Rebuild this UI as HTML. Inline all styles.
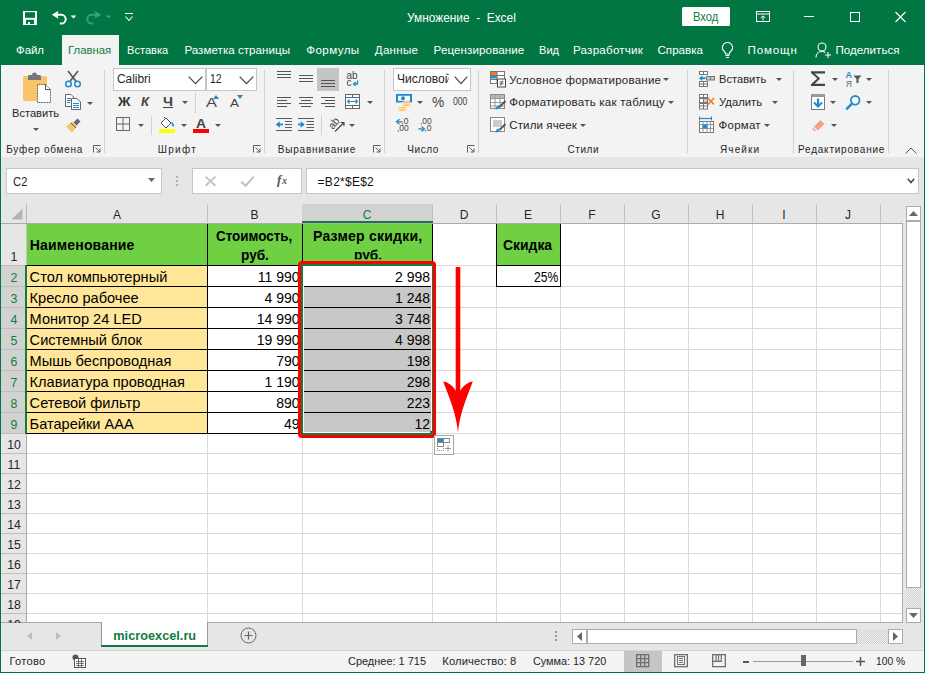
<!DOCTYPE html>
<html><head><meta charset="utf-8"><style>
html,body{margin:0;padding:0;width:925px;height:673px;overflow:hidden;background:#fff;}
body{position:relative;font-family:"Liberation Sans",sans-serif;}
body>div,body>svg,body>span{position:absolute;}
span{white-space:pre;transform-origin:0 0;display:block;}
svg{overflow:visible;}
</style></head><body>
<div style="left:0px;top:0px;width:925px;height:65px;background:#017542;"></div>
<div style="left:62px;top:35px;width:57px;height:30px;background:#f3f3f3;"></div>
<div style="left:0px;top:65px;width:925px;height:92px;background:#f3f3f3;"></div>
<div style="left:0px;top:157px;width:925px;height:1px;background:#d6d6d6;"></div>
<div style="left:0px;top:157px;width:925px;height:66px;background:#e6e6e6;"></div>
<svg style="left:22px;top:10px;" width="16" height="16" viewBox="0 0 16 16"><rect x="1" y="1" width="14" height="14" fill="#fff"/><rect x="3" y="2.2" width="10" height="5.6" fill="#017542"/><rect x="4" y="9.8" width="8" height="4.2" fill="#017542"/><rect x="6" y="12" width="2" height="2" fill="#fff"/></svg>
<svg style="left:51px;top:10px;" width="17" height="16" viewBox="0 0 17 16"><path d="M0.8 4.8L7.4 0.8 6.4 4.8 7.4 8.8z" fill="#fff"/><path d="M6 4.8H10.3A4.4 4.4 0 0 1 10.3 13.6H9.6" fill="none" stroke="#fff" stroke-width="2" stroke-linecap="round"/></svg>
<svg style="left:70px;top:15px;" width="7" height="4" viewBox="0 0 7 4"><path d="M0.5 0.5h6l-3 3z" fill="#fff"/></svg>
<svg style="left:86px;top:10px;" width="17" height="16" viewBox="0 0 17 16"><g transform="translate(16 0) scale(-1 1)"><path d="M0.8 4.8L7.4 0.8 6.4 4.8 7.4 8.8z" fill="#3a9c84"/><path d="M6 4.8H10.3A4.4 4.4 0 0 1 10.3 13.6H9.6" fill="none" stroke="#3a9c84" stroke-width="2" stroke-linecap="round"/></g></svg>
<svg style="left:105px;top:15px;" width="7" height="4" viewBox="0 0 7 4"><path d="M0.5 0.5h6l-3 3z" fill="#3a9c84"/></svg>
<svg style="left:124px;top:12px;" width="10" height="10" viewBox="0 0 10 10"><path d="M1 1.5h8" stroke="#fff" stroke-width="1"/><path d="M1.5 4.5l3.5 4 3.5-4" fill="none" stroke="#fff" stroke-width="1.1"/></svg>
<span style="left:406.70px;top:11.84px;font-size:12px;line-height:12px;font-weight:400;color:#fff;transform:scaleX(0.9902);">Умножение  -  Excel</span>
<div style="left:682px;top:7px;width:48px;height:19px;background:#fff;border-radius:1.5px"></div>
<span style="left:693.20px;top:10.84px;font-size:12px;line-height:12px;font-weight:400;color:#107c41;transform:scaleX(0.9357);">Вход</span>
<svg style="left:755px;top:10px;" width="16" height="13" viewBox="0 0 16 13"><rect x="1.5" y="1.5" width="13" height="10" fill="none" stroke="#fff" stroke-width="1"/><path d="M1.5 4h13" stroke="#fff"/><path d="M8 10.5V6M5.8 8L8 5.8 10.2 8" fill="none" stroke="#fff" stroke-width="1"/></svg>
<div style="left:804px;top:16px;width:10px;height:1px;background:#fff;"></div>
<svg style="left:849px;top:11px;" width="12" height="12" viewBox="0 0 12 12"><rect x="1.5" y="1.5" width="9" height="9" fill="none" stroke="#fff" stroke-width="1"/></svg>
<svg style="left:894px;top:11px;" width="13" height="12" viewBox="0 0 13 12"><path d="M1.5 1L11.5 11M11.5 1L1.5 11" stroke="#fff" stroke-width="1.1"/></svg>
<span style="left:16.30px;top:44.38px;font-size:11.6px;line-height:11.6px;font-weight:400;color:#fff;transform:scaleX(0.9823);">Файл</span>
<span style="left:68.20px;top:44.38px;font-size:11.6px;line-height:11.6px;font-weight:400;color:#107c41;transform:scaleX(0.9790);">Главная</span>
<span style="left:127.30px;top:44.38px;font-size:11.6px;line-height:11.6px;font-weight:400;color:#fff;transform:scaleX(0.9561);">Вставка</span>
<span style="left:184.40px;top:44.38px;font-size:11.6px;line-height:11.6px;font-weight:400;color:#fff;letter-spacing:0.027px;">Разметка страницы</span>
<span style="left:306.30px;top:44.38px;font-size:11.6px;line-height:11.6px;font-weight:400;color:#fff;letter-spacing:0.408px;">Формулы</span>
<span style="left:374.80px;top:44.38px;font-size:11.6px;line-height:11.6px;font-weight:400;color:#fff;letter-spacing:0.263px;">Данные</span>
<span style="left:433.60px;top:44.38px;font-size:11.6px;line-height:11.6px;font-weight:400;color:#fff;letter-spacing:0.091px;">Рецензирование</span>
<span style="left:539.10px;top:44.38px;font-size:11.6px;line-height:11.6px;font-weight:400;color:#fff;transform:scaleX(0.9583);">Вид</span>
<span style="left:573.00px;top:44.38px;font-size:11.6px;line-height:11.6px;font-weight:400;color:#fff;letter-spacing:0.229px;">Разработчик</span>
<span style="left:657.50px;top:44.38px;font-size:11.6px;line-height:11.6px;font-weight:400;color:#fff;">Справка</span>
<span style="left:747.50px;top:44.38px;font-size:11.6px;line-height:11.6px;font-weight:400;color:#fff;letter-spacing:0.832px;">Помощн</span>
<span style="left:835.50px;top:44.38px;font-size:11.6px;line-height:11.6px;font-weight:400;color:#fff;">Поделиться</span>
<svg style="left:720px;top:41px;" width="15" height="18" viewBox="0 0 15 18"><path d="M7.5 1.5a5 5 0 0 0-3 9c.8.7 1 1.5 1 2.5h4c0-1 .2-1.8 1-2.5a5 5 0 0 0-3-9z" fill="none" stroke="#fff" stroke-width="1.1"/><path d="M5.5 14.5h4M6 16.5h3" stroke="#fff" stroke-width="1.1"/></svg>
<svg style="left:815px;top:41px;" width="18" height="18" viewBox="0 0 18 18"><circle cx="7" cy="6" r="4" fill="none" stroke="#fff" stroke-width="1.1"/><path d="M1 16.5c0-3.5 2.5-6 6-6 1.5 0 2.5.4 3.4 1" fill="none" stroke="#fff" stroke-width="1.1"/><path d="M13 11v6M10 14h6" stroke="#fff" stroke-width="1.1"/></svg>
<div style="left:104px;top:70px;width:1px;height:83px;background:#d1d1d1;"></div>
<div style="left:264px;top:70px;width:1px;height:83px;background:#d1d1d1;"></div>
<div style="left:384px;top:70px;width:1px;height:83px;background:#d1d1d1;"></div>
<div style="left:478px;top:70px;width:1px;height:83px;background:#d1d1d1;"></div>
<div style="left:687px;top:70px;width:1px;height:83px;background:#d1d1d1;"></div>
<div style="left:793px;top:70px;width:1px;height:83px;background:#d1d1d1;"></div>
<div style="left:888px;top:70px;width:1px;height:83px;background:#d1d1d1;"></div>
<span style="left:6.30px;top:144.84px;font-size:10px;line-height:10px;font-weight:400;color:#262626;letter-spacing:0.732px;">Буфер обмена</span>
<span style="left:157.80px;top:144.84px;font-size:10px;line-height:10px;font-weight:400;color:#262626;letter-spacing:1.275px;">Шрифт</span>
<span style="left:277.80px;top:144.84px;font-size:10px;line-height:10px;font-weight:400;color:#262626;letter-spacing:0.779px;">Выравнивание</span>
<span style="left:407.30px;top:144.84px;font-size:10px;line-height:10px;font-weight:400;color:#262626;letter-spacing:0.560px;">Число</span>
<span style="left:567.50px;top:144.84px;font-size:10px;line-height:10px;font-weight:400;color:#262626;letter-spacing:0.548px;">Стили</span>
<span style="left:720.00px;top:144.84px;font-size:10px;line-height:10px;font-weight:400;color:#262626;letter-spacing:1.112px;">Ячейки</span>
<span style="left:798.00px;top:144.84px;font-size:10px;line-height:10px;font-weight:400;color:#262626;letter-spacing:0.786px;">Редактирование</span>
<svg style="left:93px;top:145px;" width="8" height="8" viewBox="0 0 8 8"><path d="M0.5 7.5V0.5h7" fill="none" stroke="#606060" stroke-width="1"/><path d="M2.5 2.5l4.5 4.5M7 3.5V7H3.5" fill="none" stroke="#606060" stroke-width="1"/></svg>
<svg style="left:253px;top:145px;" width="8" height="8" viewBox="0 0 8 8"><path d="M0.5 7.5V0.5h7" fill="none" stroke="#606060" stroke-width="1"/><path d="M2.5 2.5l4.5 4.5M7 3.5V7H3.5" fill="none" stroke="#606060" stroke-width="1"/></svg>
<svg style="left:373px;top:145px;" width="8" height="8" viewBox="0 0 8 8"><path d="M0.5 7.5V0.5h7" fill="none" stroke="#606060" stroke-width="1"/><path d="M2.5 2.5l4.5 4.5M7 3.5V7H3.5" fill="none" stroke="#606060" stroke-width="1"/></svg>
<svg style="left:467px;top:145px;" width="8" height="8" viewBox="0 0 8 8"><path d="M0.5 7.5V0.5h7" fill="none" stroke="#606060" stroke-width="1"/><path d="M2.5 2.5l4.5 4.5M7 3.5V7H3.5" fill="none" stroke="#606060" stroke-width="1"/></svg>
<svg style="left:905px;top:147px;" width="12" height="7" viewBox="0 0 12 7"><path d="M0.5 6.5l5.5-5.5 5.5 5.5" fill="none" stroke="#555" stroke-width="1"/></svg>
<svg style="left:22px;top:72px;" width="31" height="32" viewBox="0 0 31 32">
<rect x="1" y="4" width="24" height="25" rx="1.5" fill="#f9c46a"/>
<path d="M6 8V4.5c0-1 .6-1.5 1.5-1.5h2.5c0-1.5 1-2.5 2.5-2.5s2.5 1 2.5 2.5H17.5c.9 0 1.5.5 1.5 1.5V8z" fill="#777"/>
<path d="M15.5 12.5h8l5 5v13h-13z" fill="#fff" stroke="#555" stroke-width="1" stroke-dasharray="1 .6"/>
<path d="M23.5 12.5v5h5" fill="none" stroke="#555" stroke-width="1"/>
</svg>
<span style="left:11.60px;top:107.87px;font-size:11.5px;line-height:11.5px;font-weight:400;color:#262626;transform:scaleX(0.9662);">Вставить</span>
<svg style="left:33px;top:128px;" width="6" height="3" viewBox="0 0 6 3"><path d="M0 0h6l-3 3z" fill="#555"/></svg>
<svg style="left:64px;top:70px;" width="18" height="18" viewBox="0 0 18 18"><path d="M4 1l8.5 11M14 1L5.5 12" stroke="#555" stroke-width="1.6"/><circle cx="4.5" cy="14" r="2.8" fill="none" stroke="#1e8bcd" stroke-width="1.5"/><circle cx="13.5" cy="14" r="2.8" fill="none" stroke="#1e8bcd" stroke-width="1.5"/></svg>
<svg style="left:64px;top:94px;" width="18" height="16" viewBox="0 0 18 16"><path d="M1.5 0.5h5.5l2.5 2.5v9.5h-8z" fill="#fff" stroke="#666"/><path d="M7.5 4.5h5.5l3.5 3.5v7.5h-9z" fill="#fff" stroke="#666"/><path d="M3 4.5h4M3 6.5h4M3 8.5h3M9 9.5h6M9 11.5h6M9 13.5h6" stroke="#1e8bcd"/></svg>
<svg style="left:87px;top:101.5px;" width="6" height="3" viewBox="0 0 6 3"><path d="M0 0h6l-3 3z" fill="#555"/></svg>
<svg style="left:64px;top:117px;" width="18" height="16" viewBox="0 0 18 16"><path d="M2 9.5l6-5 5 5-5 6z" fill="#f9c46a"/><path d="M9.5 5.5l4-4 3 3-4 4z" fill="#666"/><path d="M7 6l5 5" stroke="#555" stroke-width="1"/></svg>
<div style="left:113px;top:68px;width:93px;height:23px;background:#fff;box-sizing:border-box;border:1px solid #c6c6c6"></div>
<div style="left:206px;top:68px;width:51px;height:23px;background:#fff;box-sizing:border-box;border:1px solid #c6c6c6"></div>
<span style="left:116.50px;top:73.12px;font-size:12.5px;line-height:12.5px;font-weight:400;color:#262626;transform:scaleX(0.9513);">Calibri</span>
<span style="left:209.60px;top:73.12px;font-size:12.5px;line-height:12.5px;font-weight:400;color:#262626;transform:scaleX(0.8343);">12</span>
<svg style="left:188px;top:76px;" width="15" height="9" viewBox="0 0 15 9"><path d="M0.7 0.7l6.8 7 6.8-7" fill="none" stroke="#444" stroke-width="1.2"/></svg>
<svg style="left:239px;top:76px;" width="15" height="9" viewBox="0 0 15 9"><path d="M0.7 0.7l6.8 7 6.8-7" fill="none" stroke="#444" stroke-width="1.2"/></svg>
<span style="left:117.50px;top:95.54px;font-size:12px;line-height:12px;font-weight:700;color:#333;transform:scaleX(1.1525);">Ж</span>
<span style="left:141.00px;top:95.54px;font-size:12px;line-height:12px;font-weight:700;color:#444;transform:scaleX(1.0845);font-style:italic;">К</span>
<span style="left:163.00px;top:95.54px;font-size:12px;line-height:12px;font-weight:700;color:#444;transform:scaleX(1.1860);">Ч</span>
<div style="left:163px;top:107px;width:10px;height:1px;background:#444;"></div>
<svg style="left:181.5px;top:101px;" width="6" height="3" viewBox="0 0 6 3"><path d="M0 0h6l-3 3z" fill="#555"/></svg>
<div style="left:195px;top:93px;width:1px;height:20px;background:#d1d1d1;"></div>
<span style="left:206.00px;top:96.27px;font-size:13.5px;line-height:13.5px;font-weight:400;color:#444;transform:scaleX(1.2216);">A</span>
<svg style="left:213px;top:95px;" width="6" height="4" viewBox="0 0 6 4"><path d="M0 4L3 0l3 4z" fill="#1e8bcd"/></svg>
<span style="left:230.00px;top:98.39px;font-size:11px;line-height:11px;font-weight:400;color:#444;transform:scaleX(1.2267);">A</span>
<svg style="left:237px;top:95px;" width="6" height="4" viewBox="0 0 6 4"><path d="M0 0h6L3 4z" fill="#1e8bcd"/></svg>
<svg style="left:116px;top:117px;" width="15" height="15" viewBox="0 0 15 15"><rect x="0.5" y="0.5" width="13" height="13" fill="none" stroke="#666"/><path d="M7 0.5v13M0.5 7h13" stroke="#666"/></svg>
<svg style="left:138px;top:124px;" width="6" height="3" viewBox="0 0 6 3"><path d="M0 0h6l-3 3z" fill="#555"/></svg>
<div style="left:151px;top:116px;width:1px;height:19px;background:#d1d1d1;"></div>
<svg style="left:158px;top:116px;" width="18" height="17" viewBox="0 0 18 17"><path d="M3 7l5-5 5 5-5 5z" fill="#fff" stroke="#555" stroke-width="1"/><path d="M6 1l2 2" stroke="#555"/><path d="M13.5 6.5c1.5 1.5 2 3 1.2 3.8" fill="none" stroke="#1e8bcd" stroke-width="1.6"/><rect x="1" y="13" width="16" height="4" fill="#ffff00"/></svg>
<svg style="left:180.5px;top:124px;" width="6" height="3" viewBox="0 0 6 3"><path d="M0 0h6l-3 3z" fill="#555"/></svg>
<span style="left:196.00px;top:117.84px;font-size:12px;line-height:12px;font-weight:700;color:#444;transform:scaleX(1.1539);">A</span>
<div style="left:193px;top:129px;width:16px;height:4px;background:#ff0000;"></div>
<svg style="left:214.5px;top:124px;" width="6" height="3" viewBox="0 0 6 3"><path d="M0 0h6l-3 3z" fill="#555"/></svg>
<svg style="left:277px;top:71px;" width="15" height="9" viewBox="0 0 15 9"><rect x="0" y="0" width="14" height="1" fill="#555"/><rect x="0" y="3" width="14" height="1" fill="#555"/><rect x="0" y="6" width="14" height="1" fill="#555"/></svg>
<svg style="left:298.5px;top:75px;" width="15" height="9" viewBox="0 0 15 9"><rect x="0" y="0" width="14" height="1" fill="#555"/><rect x="0" y="3" width="14" height="1" fill="#555"/><rect x="0" y="6" width="14" height="1" fill="#555"/></svg>
<div style="left:317px;top:68px;width:22px;height:23px;background:#c5c5c5;"></div>
<svg style="left:321px;top:80px;" width="15" height="9" viewBox="0 0 15 9"><rect x="0" y="0" width="14" height="1" fill="#555"/><rect x="0" y="3" width="14" height="1" fill="#555"/><rect x="0" y="6" width="14" height="1" fill="#555"/></svg>
<svg style="left:345px;top:70px;" width="16" height="17" viewBox="0 0 16 17"><text x="1.5" y="8.5" font-family="Liberation Sans" font-size="10" fill="#444">ab</text><text x="1.5" y="16" font-family="Liberation Sans" font-size="10" fill="#444">c</text><path d="M12.5 10.5v3.5H9" fill="none" stroke="#1e8bcd" stroke-width="1.3"/><path d="M10.5 12l-2 2 2 2" fill="none" stroke="#1e8bcd" stroke-width="1.2"/></svg>
<svg style="left:277px;top:97px;" width="15" height="12" viewBox="0 0 15 12"><rect x="0" y="0" width="14" height="1" fill="#555"/><rect x="0" y="3" width="10" height="1" fill="#555"/><rect x="0" y="6" width="14" height="1" fill="#555"/><rect x="0" y="9" width="10" height="1" fill="#555"/></svg>
<svg style="left:298.5px;top:97px;" width="15" height="12" viewBox="0 0 15 12"><rect x="0" y="0" width="14" height="1" fill="#555"/><rect x="2" y="3" width="10" height="1" fill="#555"/><rect x="0" y="6" width="14" height="1" fill="#555"/><rect x="2" y="9" width="10" height="1" fill="#555"/></svg>
<svg style="left:321px;top:97px;" width="15" height="12" viewBox="0 0 15 12"><rect x="0" y="0" width="14" height="1" fill="#555"/><rect x="4" y="3" width="10" height="1" fill="#555"/><rect x="0" y="6" width="14" height="1" fill="#555"/><rect x="4" y="9" width="10" height="1" fill="#555"/></svg>
<svg style="left:345px;top:94px;" width="16" height="16" viewBox="0 0 16 16"><rect x="0.5" y="0.5" width="14" height="14" fill="#fff" stroke="#666"/><path d="M0.5 3.5h14M0.5 11.5h14M7.5 0.5v3M7.5 11.5v3" stroke="#666"/><path d="M2.5 7.5h10M4.5 5.5l-2 2 2 2M10.5 5.5l2 2-2 2" fill="none" stroke="#1e8bcd" stroke-width="1.1"/></svg>
<svg style="left:367px;top:101px;" width="6" height="3" viewBox="0 0 6 3"><path d="M0 0h6l-3 3z" fill="#555"/></svg>
<svg style="left:275px;top:117px;" width="18" height="15" viewBox="0 0 18 15"><path d="M1 1.5h16M10 4.5h7M10 7.5h7M10 10.5h7M1 13.5h16" stroke="#5a5a5a"/><path d="M2 7.5h6" stroke="#1e8bcd" stroke-width="1.8"/><path d="M0.8 7.5L4.8 4.2v6.6z" fill="#1e8bcd"/></svg>
<svg style="left:297px;top:117px;" width="18" height="15" viewBox="0 0 18 15"><path d="M1 1.5h16M9.5 4.5h7.5M9.5 7.5h7.5M9.5 10.5h7.5M1 13.5h16" stroke="#5a5a5a"/><path d="M1 7.5h5.5" stroke="#1e8bcd" stroke-width="1.8"/><path d="M7.7 7.5L3.7 4.2v6.6z" fill="#1e8bcd"/></svg>
<div style="left:321px;top:115px;width:1px;height:20px;background:#d1d1d1;"></div>
<svg style="left:328px;top:116px;" width="18" height="17" viewBox="0 0 18 17"><text x="0" y="0" font-family="Liberation Sans" font-size="10.5" fill="#444" transform="translate(5 14) rotate(-52)">ab</text><path d="M7 15.5L16 6.5M12.5 6.5H16V10" fill="none" stroke="#444" stroke-width="1.1"/></svg>
<svg style="left:349px;top:124px;" width="6" height="3" viewBox="0 0 6 3"><path d="M0 0h6l-3 3z" fill="#555"/></svg>
<div style="left:393px;top:68px;width:78px;height:23px;background:#fff;box-sizing:border-box;border:1px solid #c6c6c6"></div>
<span style="left:396.60px;top:73.12px;font-size:12.5px;line-height:12.5px;font-weight:400;color:#262626;transform:scaleX(0.9666);clip-path:inset(0 3px 0 0);">Числовой</span>
<svg style="left:454px;top:76px;" width="14" height="9" viewBox="0 0 14 9"><path d="M0.7 0.7l6.3 7 6.3-7" fill="none" stroke="#444" stroke-width="1.2"/></svg>
<svg style="left:395px;top:93px;" width="18" height="18" viewBox="0 0 18 18"><rect x="1" y="1" width="16" height="8.5" fill="#1e8bcd"/><rect x="3" y="2.8" width="12" height="5" fill="#fff"/><circle cx="8" cy="5.2" r="2" fill="#1e8bcd"/><ellipse cx="11.5" cy="9.8" rx="4.2" ry="1.5" fill="#f9c46a" stroke="#fff" stroke-width=".6"/><ellipse cx="11.5" cy="12.3" rx="4.2" ry="1.5" fill="#f9c46a" stroke="#fff" stroke-width=".6"/><ellipse cx="7.5" cy="14.8" rx="4.2" ry="1.5" fill="#f9c46a" stroke="#fff" stroke-width=".6"/><ellipse cx="7.5" cy="17" rx="4.2" ry="1.3" fill="#f9c46a" stroke="#fff" stroke-width=".6"/></svg>
<svg style="left:417px;top:101px;" width="6" height="3" viewBox="0 0 6 3"><path d="M0 0h6l-3 3z" fill="#555"/></svg>
<span style="left:432.00px;top:95.43px;font-size:14.5px;line-height:14.5px;font-weight:400;color:#444;transform:scaleX(0.9463);">%</span>
<span style="left:452.50px;top:97.03px;font-size:10px;line-height:10px;font-weight:400;color:#444;transform:scaleX(0.8631);">000</span>
<svg style="left:395px;top:117px;" width="17" height="16" viewBox="0 0 17 16"><text x="6.5" y="6.5" font-family="Liberation Sans" font-size="8.5" fill="#444">,0</text><text x="2" y="13.8" font-family="Liberation Sans" font-size="8.5" fill="#444">,00</text><path d="M2.5 4.8h5" stroke="#1e8bcd" stroke-width="1.4"/><path d="M4.5 2.3L1.5 4.8l3 2.5" fill="none" stroke="#1e8bcd" stroke-width="1.3"/></svg>
<svg style="left:418px;top:117px;" width="17" height="16" viewBox="0 0 17 16"><text x="2" y="6.5" font-family="Liberation Sans" font-size="8.5" fill="#444">,00</text><text x="6.5" y="13.8" font-family="Liberation Sans" font-size="8.5" fill="#444">,0</text><path d="M0.5 12h5" stroke="#1e8bcd" stroke-width="1.4"/><path d="M3.5 9.5l3 2.5-3 2.5" fill="none" stroke="#1e8bcd" stroke-width="1.3"/></svg>
<svg style="left:490px;top:71px;" width="17" height="17" viewBox="0 0 17 17"><rect x="0.5" y="0.5" width="14" height="12" fill="#fff" stroke="#777"/><rect x="1" y="1" width="6" height="3" fill="#f07a2a"/><rect x="1" y="4.5" width="6" height="3" fill="#1e8bcd"/><path d="M0.5 4.5h14M0.5 8.5h14M7 0.5v12" stroke="#777"/><rect x="7.5" y="8" width="8" height="8" fill="#fff" stroke="#444"/><path d="M9.5 11h4M9.5 13h4M12.5 9.5l-2 5" stroke="#444" stroke-width=".8"/></svg>
<svg style="left:490px;top:94px;" width="17" height="17" viewBox="0 0 17 17"><rect x="0.5" y="0.5" width="14" height="14" fill="#fff" stroke="#888"/><rect x="1" y="1" width="13" height="3" fill="#bbb"/><path d="M0.5 4.5h14M0.5 8.5h14M0.5 12h14M5 0.5v14M10 0.5v14" stroke="#999"/><path d="M15.5 7l-6 6" stroke="#555" stroke-width="2"/><path d="M9 11.5c-2 0-3 1.5-3.5 4 2.5 0 4-1 4.5-3z" fill="#1e8bcd"/></svg>
<svg style="left:490px;top:117px;" width="17" height="17" viewBox="0 0 17 17"><rect x="0.5" y="0.5" width="14" height="14" fill="#fff" stroke="#888"/><rect x="3" y="3" width="9" height="7" fill="#ccc"/><path d="M15.5 7l-6 6" stroke="#555" stroke-width="2"/><path d="M9 11.5c-2 0-3 1.5-3.5 4 2.5 0 4-1 4.5-3z" fill="#1e8bcd"/></svg>
<span style="left:509.30px;top:74.67px;font-size:11.5px;line-height:11.5px;font-weight:400;color:#262626;letter-spacing:0.245px;">Условное форматирование</span>
<svg style="left:663px;top:78px;" width="6" height="3" viewBox="0 0 6 3"><path d="M0 0h6l-3 3z" fill="#555"/></svg>
<span style="left:509.30px;top:97.47px;font-size:11.5px;line-height:11.5px;font-weight:400;color:#262626;letter-spacing:0.241px;">Форматировать как таблицу</span>
<svg style="left:668px;top:101px;" width="6" height="3" viewBox="0 0 6 3"><path d="M0 0h6l-3 3z" fill="#555"/></svg>
<span style="left:509.30px;top:120.37px;font-size:11.5px;line-height:11.5px;font-weight:400;color:#262626;letter-spacing:0.123px;">Стили ячеек</span>
<svg style="left:579.5px;top:124px;" width="6" height="3" viewBox="0 0 6 3"><path d="M0 0h6l-3 3z" fill="#555"/></svg>
<svg style="left:698px;top:70px;" width="18" height="18" viewBox="0 0 18 18"><rect x="1.5" y="1.5" width="8" height="3" fill="#fff" stroke="#777"/><path d="M5.5 1.5v3" stroke="#777"/><rect x="8.5" y="6.5" width="8" height="3.5" fill="#ccc" stroke="#777"/><path d="M12.5 6.5v3.5" stroke="#777"/><rect x="1.5" y="11.5" width="8" height="5" fill="#fff" stroke="#777"/><path d="M1.5 14h8M5.5 11.5v5" stroke="#777"/><path d="M2.5 8.2H7.5" stroke="#1e8bcd" stroke-width="1.8"/><path d="M1 8.2L4.3 5.5v5.4z" fill="#1e8bcd"/></svg>
<span style="left:718.50px;top:73.67px;font-size:11.5px;line-height:11.5px;font-weight:400;color:#262626;transform:scaleX(0.9683);">Вставить</span>
<svg style="left:776px;top:78px;" width="6" height="3" viewBox="0 0 6 3"><path d="M0 0h6l-3 3z" fill="#555"/></svg>
<svg style="left:698px;top:93px;" width="18" height="18" viewBox="0 0 18 18"><rect x="1.5" y="1.5" width="8" height="3" fill="#fff" stroke="#777"/><path d="M5.5 1.5v3" stroke="#777"/><rect x="1.5" y="5.5" width="8" height="4" fill="#fff" stroke="#777"/><rect x="5.5" y="5.5" width="4" height="4" fill="#ccc" stroke="#777"/><rect x="1.5" y="10.5" width="8" height="5.5" fill="#fff" stroke="#777"/><path d="M1.5 13h8M5.5 10.5v5.5" stroke="#777"/><path d="M10 5l6 6.5M16 5l-6 6.5" stroke="#f07a2a" stroke-width="1.6"/></svg>
<span style="left:718.50px;top:97.27px;font-size:11.5px;line-height:11.5px;font-weight:400;color:#262626;transform:scaleX(0.9817);">Удалить</span>
<svg style="left:772px;top:101px;" width="6" height="3" viewBox="0 0 6 3"><path d="M0 0h6l-3 3z" fill="#555"/></svg>
<svg style="left:698px;top:116px;" width="18" height="18" viewBox="0 0 18 18"><path d="M2 2.5h11" stroke="#1e8bcd" stroke-width="1.2"/><path d="M1.5 0.5v4M13.5 0.5v4" stroke="#1e8bcd"/><rect x="1.5" y="5.5" width="14" height="11" fill="#fff" stroke="#777"/><path d="M1.5 8.5h14M1.5 12.5h14M5 5.5v11M9 5.5v11M12.5 5.5v11" stroke="#999"/><rect x="4.5" y="8.5" width="5" height="4" fill="#1e8bcd"/></svg>
<span style="left:718.50px;top:120.17px;font-size:11.5px;line-height:11.5px;font-weight:400;color:#262626;letter-spacing:0.250px;">Формат</span>
<svg style="left:764px;top:124px;" width="6" height="3" viewBox="0 0 6 3"><path d="M0 0h6l-3 3z" fill="#555"/></svg>
<svg style="left:809px;top:70px;" width="18" height="18" viewBox="0 0 18 18"><path d="M2 1.2H16V3.4H5.6L11.2 8.6 5.6 13.8H16V16H2V14.2L8.3 8.6 2 3z" fill="#444"/></svg>
<svg style="left:832px;top:78px;" width="6" height="3" viewBox="0 0 6 3"><path d="M0 0h6l-3 3z" fill="#555"/></svg>
<svg style="left:845px;top:70px;" width="19" height="18" viewBox="0 0 19 18"><text x="0.5" y="8" font-family="Liberation Sans" font-size="9" font-weight="bold" fill="#1e8bcd">A</text><text x="0.8" y="17" font-family="Liberation Sans" font-size="8.5" fill="#666">Я</text><path d="M8.5 5.5h8l-3 3.5v4h-2V9z" fill="#555"/></svg>
<svg style="left:865.5px;top:78px;" width="6" height="3" viewBox="0 0 6 3"><path d="M0 0h6l-3 3z" fill="#555"/></svg>
<svg style="left:810px;top:93px;" width="16" height="17" viewBox="0 0 16 17"><rect x="1.5" y="1.5" width="13" height="15" fill="#fff" stroke="#777"/><rect x="1" y="1" width="14" height="3" fill="#999"/><path d="M8 5.5v7" stroke="#1e8bcd" stroke-width="2.2"/><path d="M4 9.5L8 13.5 12 9.5" fill="none" stroke="#1e8bcd" stroke-width="2"/></svg>
<svg style="left:829.5px;top:101px;" width="6" height="3" viewBox="0 0 6 3"><path d="M0 0h6l-3 3z" fill="#555"/></svg>
<svg style="left:845px;top:94px;" width="17" height="16" viewBox="0 0 17 16"><circle cx="10.2" cy="6.3" r="4.3" fill="#fff" stroke="#1e8bcd" stroke-width="1.8"/><path d="M7 9.6L2 14.6" stroke="#1e8bcd" stroke-width="2.6" stroke-linecap="round"/></svg>
<svg style="left:865.5px;top:101px;" width="6" height="3" viewBox="0 0 6 3"><path d="M0 0h6l-3 3z" fill="#555"/></svg>
<svg style="left:811px;top:117px;" width="15" height="15" viewBox="0 0 15 15"><path d="M3 9.5L9.5 3l4 4L7 13.5z" fill="#f4a582"/><path d="M1.5 11l3 3" stroke="#f4b9a0" stroke-width="2"/><path d="M6.5 8.5l3-3" stroke="#e8774a" stroke-width="1" stroke-dasharray="1 1"/></svg>
<svg style="left:830.5px;top:124px;" width="6" height="3" viewBox="0 0 6 3"><path d="M0 0h6l-3 3z" fill="#555"/></svg>
<div style="left:6px;top:168px;width:156px;height:26px;background:#fff;box-sizing:border-box;border:1px solid #c6c6c6"></div>
<span style="left:13.30px;top:175.94px;font-size:12px;line-height:12px;font-weight:400;color:#262626;transform:scaleX(0.9387);">C2</span>
<svg style="left:148px;top:178px;" width="7" height="4" viewBox="0 0 7 4"><path d="M0 0h7L3.5 4z" fill="#666"/></svg>
<div style="left:176px;top:176px;width:2px;height:2px;background:#b0b0b0;"></div>
<div style="left:176px;top:180px;width:2px;height:2px;background:#b0b0b0;"></div>
<div style="left:176px;top:184px;width:2px;height:2px;background:#b0b0b0;"></div>
<div style="left:192px;top:168px;width:110px;height:26px;background:#fff;box-sizing:border-box;border:1px solid #c6c6c6"></div>
<svg style="left:204px;top:175px;" width="13" height="12" viewBox="0 0 13 12"><path d="M1.6 1.6l9.8 9.2M11.4 1.6L1.6 10.8" stroke="#c2c2c2" stroke-width="1.9"/></svg>
<svg style="left:240px;top:175px;" width="15" height="12" viewBox="0 0 15 12"><path d="M1.2 6.8l4.6 4 7.8-9.2" fill="none" stroke="#c2c2c2" stroke-width="2.1"/></svg>
<svg style="left:276px;top:172px;" width="15" height="16" viewBox="0 0 15 16"><text x="1" y="12" font-family="Liberation Serif" font-style="italic" font-weight="bold" font-size="13" fill="#555">f</text><text x="6" y="12.3" font-family="Liberation Serif" font-style="italic" font-weight="bold" font-size="10" fill="#555">x</text></svg>
<div style="left:306px;top:168px;width:613px;height:26px;background:#fff;box-sizing:border-box;border:1px solid #c6c6c6"></div>
<span style="left:317.60px;top:175.84px;font-size:12px;line-height:12px;font-weight:400;color:#111;letter-spacing:0.260px;">=B2*$E$2</span>
<svg style="left:907px;top:178px;" width="8" height="6" viewBox="0 0 8 6"><path d="M0.8 0.8L4 4.5 7.2 0.8" fill="none" stroke="#444" stroke-width="1.5"/></svg>
<div style="left:903px;top:223px;width:21px;height:400px;background:#e6e6e6;"></div>
<div style="left:27px;top:223px;width:876px;height:399px;background:#fff;"></div>
<div style="left:207px;top:223px;width:1px;height:399px;background:#d9d9d9;"></div>
<div style="left:302px;top:223px;width:1px;height:399px;background:#d9d9d9;"></div>
<div style="left:432px;top:223px;width:1px;height:399px;background:#d9d9d9;"></div>
<div style="left:496px;top:223px;width:1px;height:399px;background:#d9d9d9;"></div>
<div style="left:560px;top:223px;width:1px;height:399px;background:#d9d9d9;"></div>
<div style="left:624px;top:223px;width:1px;height:399px;background:#d9d9d9;"></div>
<div style="left:688px;top:223px;width:1px;height:399px;background:#d9d9d9;"></div>
<div style="left:752px;top:223px;width:1px;height:399px;background:#d9d9d9;"></div>
<div style="left:816px;top:223px;width:1px;height:399px;background:#d9d9d9;"></div>
<div style="left:880px;top:223px;width:1px;height:399px;background:#d9d9d9;"></div>
<div style="left:27px;top:265px;width:876px;height:1px;background:#d9d9d9;"></div>
<div style="left:27px;top:286px;width:876px;height:1px;background:#d9d9d9;"></div>
<div style="left:27px;top:307px;width:876px;height:1px;background:#d9d9d9;"></div>
<div style="left:27px;top:328px;width:876px;height:1px;background:#d9d9d9;"></div>
<div style="left:27px;top:349px;width:876px;height:1px;background:#d9d9d9;"></div>
<div style="left:27px;top:370px;width:876px;height:1px;background:#d9d9d9;"></div>
<div style="left:27px;top:391px;width:876px;height:1px;background:#d9d9d9;"></div>
<div style="left:27px;top:412px;width:876px;height:1px;background:#d9d9d9;"></div>
<div style="left:27px;top:433px;width:876px;height:1px;background:#d9d9d9;"></div>
<div style="left:27px;top:453px;width:876px;height:1px;background:#d9d9d9;"></div>
<div style="left:27px;top:473px;width:876px;height:1px;background:#d9d9d9;"></div>
<div style="left:27px;top:493px;width:876px;height:1px;background:#d9d9d9;"></div>
<div style="left:27px;top:513px;width:876px;height:1px;background:#d9d9d9;"></div>
<div style="left:27px;top:533px;width:876px;height:1px;background:#d9d9d9;"></div>
<div style="left:27px;top:553px;width:876px;height:1px;background:#d9d9d9;"></div>
<div style="left:27px;top:573px;width:876px;height:1px;background:#d9d9d9;"></div>
<div style="left:27px;top:593px;width:876px;height:1px;background:#d9d9d9;"></div>
<div style="left:27px;top:613px;width:876px;height:1px;background:#d9d9d9;"></div>
<div style="left:902px;top:223px;width:1px;height:400px;background:#a8a8a8;"></div>
<div style="left:1px;top:622px;width:902px;height:1px;background:#a8a8a8;"></div>
<div style="left:0px;top:204px;width:26px;height:418px;background:#e6e6e6;"></div>
<div style="left:1px;top:266px;width:25px;height:167px;background:#d2d2d2;"></div>
<div style="left:1px;top:265px;width:25px;height:1px;background:#bdbdbd;"></div>
<span style="left:10.58px;top:250.59px;font-size:12.3px;line-height:12.3px;font-weight:400;color:#262626;">1</span>
<div style="left:1px;top:286px;width:25px;height:1px;background:#bdbdbd;"></div>
<span style="left:10.58px;top:271.59px;font-size:12.3px;line-height:12.3px;font-weight:400;color:#107c41;">2</span>
<div style="left:1px;top:307px;width:25px;height:1px;background:#bdbdbd;"></div>
<span style="left:10.58px;top:292.59px;font-size:12.3px;line-height:12.3px;font-weight:400;color:#107c41;">3</span>
<div style="left:1px;top:328px;width:25px;height:1px;background:#bdbdbd;"></div>
<span style="left:10.58px;top:313.59px;font-size:12.3px;line-height:12.3px;font-weight:400;color:#107c41;">4</span>
<div style="left:1px;top:349px;width:25px;height:1px;background:#bdbdbd;"></div>
<span style="left:10.58px;top:334.59px;font-size:12.3px;line-height:12.3px;font-weight:400;color:#107c41;">5</span>
<div style="left:1px;top:370px;width:25px;height:1px;background:#bdbdbd;"></div>
<span style="left:10.58px;top:355.59px;font-size:12.3px;line-height:12.3px;font-weight:400;color:#107c41;">6</span>
<div style="left:1px;top:391px;width:25px;height:1px;background:#bdbdbd;"></div>
<span style="left:10.58px;top:376.59px;font-size:12.3px;line-height:12.3px;font-weight:400;color:#107c41;">7</span>
<div style="left:1px;top:412px;width:25px;height:1px;background:#bdbdbd;"></div>
<span style="left:10.58px;top:397.59px;font-size:12.3px;line-height:12.3px;font-weight:400;color:#107c41;">8</span>
<div style="left:1px;top:433px;width:25px;height:1px;background:#bdbdbd;"></div>
<span style="left:10.58px;top:418.59px;font-size:12.3px;line-height:12.3px;font-weight:400;color:#107c41;">9</span>
<div style="left:1px;top:453px;width:25px;height:1px;background:#bdbdbd;"></div>
<span style="left:7.16px;top:438.59px;font-size:12.3px;line-height:12.3px;font-weight:400;color:#262626;">10</span>
<div style="left:1px;top:473px;width:25px;height:1px;background:#bdbdbd;"></div>
<span style="left:7.62px;top:458.59px;font-size:12.3px;line-height:12.3px;font-weight:400;color:#262626;">11</span>
<div style="left:1px;top:493px;width:25px;height:1px;background:#bdbdbd;"></div>
<span style="left:7.16px;top:478.59px;font-size:12.3px;line-height:12.3px;font-weight:400;color:#262626;">12</span>
<div style="left:1px;top:513px;width:25px;height:1px;background:#bdbdbd;"></div>
<span style="left:7.16px;top:498.59px;font-size:12.3px;line-height:12.3px;font-weight:400;color:#262626;">13</span>
<div style="left:1px;top:533px;width:25px;height:1px;background:#bdbdbd;"></div>
<span style="left:7.16px;top:518.59px;font-size:12.3px;line-height:12.3px;font-weight:400;color:#262626;">14</span>
<div style="left:1px;top:553px;width:25px;height:1px;background:#bdbdbd;"></div>
<span style="left:7.16px;top:538.59px;font-size:12.3px;line-height:12.3px;font-weight:400;color:#262626;">15</span>
<div style="left:1px;top:573px;width:25px;height:1px;background:#bdbdbd;"></div>
<span style="left:7.16px;top:558.59px;font-size:12.3px;line-height:12.3px;font-weight:400;color:#262626;">16</span>
<div style="left:1px;top:593px;width:25px;height:1px;background:#bdbdbd;"></div>
<span style="left:7.16px;top:578.59px;font-size:12.3px;line-height:12.3px;font-weight:400;color:#262626;">17</span>
<div style="left:1px;top:613px;width:25px;height:1px;background:#bdbdbd;"></div>
<span style="left:7.16px;top:598.59px;font-size:12.3px;line-height:12.3px;font-weight:400;color:#262626;">18</span>
<span style="left:7.16px;top:618.59px;font-size:12.3px;line-height:12.3px;font-weight:400;color:#262626;">19</span>
<div style="left:25px;top:265px;width:2px;height:169px;background:#107c41;"></div>
<div style="left:0px;top:223px;width:903px;height:1px;background:#ababab;"></div>
<div style="left:207px;top:204px;width:1px;height:19px;background:#c0c0c0;"></div>
<div style="left:302px;top:204px;width:1px;height:19px;background:#c0c0c0;"></div>
<div style="left:432px;top:204px;width:1px;height:19px;background:#c0c0c0;"></div>
<div style="left:496px;top:204px;width:1px;height:19px;background:#c0c0c0;"></div>
<div style="left:560px;top:204px;width:1px;height:19px;background:#c0c0c0;"></div>
<div style="left:624px;top:204px;width:1px;height:19px;background:#c0c0c0;"></div>
<div style="left:688px;top:204px;width:1px;height:19px;background:#c0c0c0;"></div>
<div style="left:752px;top:204px;width:1px;height:19px;background:#c0c0c0;"></div>
<div style="left:816px;top:204px;width:1px;height:19px;background:#c0c0c0;"></div>
<div style="left:880px;top:204px;width:1px;height:19px;background:#c0c0c0;"></div>
<div style="left:26px;top:204px;width:1px;height:19px;background:#b9b9b9;"></div>
<div style="left:26px;top:224px;width:1px;height:41px;background:#c6c6c6;"></div>
<div style="left:26px;top:434px;width:1px;height:188px;background:#a8a8a8;"></div>
<div style="left:302px;top:204px;width:130px;height:19px;background:#d2d2d2;"></div>
<div style="left:302px;top:221px;width:131px;height:2px;background:#107c41;"></div>
<span style="left:113.00px;top:208.54px;font-size:12px;line-height:12px;font-weight:400;color:#262626;">A</span>
<span style="left:250.50px;top:208.54px;font-size:12px;line-height:12px;font-weight:400;color:#262626;">B</span>
<span style="left:362.67px;top:208.54px;font-size:12px;line-height:12px;font-weight:400;color:#107c41;">C</span>
<span style="left:459.67px;top:208.54px;font-size:12px;line-height:12px;font-weight:400;color:#262626;">D</span>
<span style="left:524.00px;top:208.54px;font-size:12px;line-height:12px;font-weight:400;color:#262626;">E</span>
<span style="left:588.33px;top:208.54px;font-size:12px;line-height:12px;font-weight:400;color:#262626;">F</span>
<span style="left:651.33px;top:208.54px;font-size:12px;line-height:12px;font-weight:400;color:#262626;">G</span>
<span style="left:715.67px;top:208.54px;font-size:12px;line-height:12px;font-weight:400;color:#262626;">H</span>
<span style="left:782.33px;top:208.54px;font-size:12px;line-height:12px;font-weight:400;color:#262626;">I</span>
<span style="left:845.00px;top:208.54px;font-size:12px;line-height:12px;font-weight:400;color:#262626;">J</span>
<svg style="left:11px;top:208px;" width="12" height="12" viewBox="0 0 12 12"><path d="M11.5 0.5v11h-11z" fill="#b4b4b4"/></svg>
<div style="left:27px;top:224px;width:275px;height:41px;background:#70d044;"></div>
<div style="left:302px;top:224px;width:130px;height:41px;background:#70d044;"></div>
<div style="left:496px;top:224px;width:64px;height:41px;background:#70d044;"></div>
<div style="left:27px;top:265px;width:180px;height:168px;background:#ffe699;"></div>
<div style="left:304px;top:287px;width:128px;height:145px;background:#c8c8c8;"></div>
<div style="left:207px;top:224px;width:1px;height:210px;background:#000;"></div>
<div style="left:302px;top:224px;width:1px;height:210px;background:#000;"></div>
<div style="left:432px;top:224px;width:1px;height:210px;background:#000;"></div>
<div style="left:27px;top:265px;width:405px;height:1px;background:#000;"></div>
<div style="left:27px;top:286px;width:405px;height:1px;background:#000;"></div>
<div style="left:27px;top:307px;width:405px;height:1px;background:#000;"></div>
<div style="left:27px;top:328px;width:405px;height:1px;background:#000;"></div>
<div style="left:27px;top:349px;width:405px;height:1px;background:#000;"></div>
<div style="left:27px;top:370px;width:405px;height:1px;background:#000;"></div>
<div style="left:27px;top:391px;width:405px;height:1px;background:#000;"></div>
<div style="left:27px;top:412px;width:405px;height:1px;background:#000;"></div>
<div style="left:27px;top:433px;width:405px;height:1px;background:#000;"></div>
<div style="left:27px;top:433px;width:405px;height:1px;background:#000;"></div>
<div style="left:496px;top:224px;width:1px;height:63px;background:#000;"></div>
<div style="left:560px;top:224px;width:1px;height:63px;background:#000;"></div>
<div style="left:496px;top:265px;width:65px;height:1px;background:#000;"></div>
<div style="left:496px;top:286px;width:65px;height:1px;background:#000;"></div>
<span style="left:29.70px;top:237.95px;font-size:14px;line-height:14px;font-weight:700;color:#000;letter-spacing:0.181px;">Наименование</span>
<span style="left:216.35px;top:229.15px;font-size:14px;line-height:14px;font-weight:700;color:#000;transform:scaleX(0.9583);">Стоимость,</span>
<span style="left:240.55px;top:248.15px;font-size:14px;line-height:14px;font-weight:700;color:#000;transform:scaleX(0.9724);">руб.</span>
<span style="left:313.00px;top:229.15px;font-size:14px;line-height:14px;font-weight:700;color:#000;letter-spacing:0.239px;">Размер скидки,</span>
<span style="left:353.60px;top:248.15px;font-size:14px;line-height:14px;font-weight:700;color:#000;transform:scaleX(0.9759);clip-path:inset(0 0 3px 0);">руб.</span>
<span style="left:503.20px;top:238.15px;font-size:14px;line-height:14px;font-weight:700;color:#000;transform:scaleX(0.9939);">Скидка</span>
<span style="left:533.50px;top:270.45px;font-size:14px;line-height:14px;font-weight:400;color:#000;transform:scaleX(0.8637);">25%</span>
<span style="left:29.60px;top:269.64px;font-size:14.6px;line-height:14.6px;font-weight:400;color:#000;">Стол компьютерный</span>
<span style="left:257.72px;top:270.15px;font-size:14px;line-height:14px;font-weight:400;color:#000;">11 990</span>
<span style="left:395.07px;top:270.15px;font-size:14px;line-height:14px;font-weight:400;color:#000;">2 998</span>
<span style="left:29.60px;top:290.64px;font-size:14.6px;line-height:14.6px;font-weight:400;color:#000;">Кресло рабочее</span>
<span style="left:264.47px;top:291.15px;font-size:14px;line-height:14px;font-weight:400;color:#000;">4 990</span>
<span style="left:395.07px;top:291.15px;font-size:14px;line-height:14px;font-weight:400;color:#000;">1 248</span>
<span style="left:29.60px;top:311.64px;font-size:14.6px;line-height:14.6px;font-weight:400;color:#000;">Монитор 24 LED</span>
<span style="left:256.68px;top:312.15px;font-size:14px;line-height:14px;font-weight:400;color:#000;">14 990</span>
<span style="left:395.07px;top:312.15px;font-size:14px;line-height:14px;font-weight:400;color:#000;">3 748</span>
<span style="left:29.60px;top:332.64px;font-size:14.6px;line-height:14.6px;font-weight:400;color:#000;">Системный блок</span>
<span style="left:256.68px;top:333.15px;font-size:14px;line-height:14px;font-weight:400;color:#000;">19 990</span>
<span style="left:395.07px;top:333.15px;font-size:14px;line-height:14px;font-weight:400;color:#000;">4 998</span>
<span style="left:29.60px;top:353.64px;font-size:14.6px;line-height:14.6px;font-weight:400;color:#000;">Мышь беспроводная</span>
<span style="left:276.14px;top:354.15px;font-size:14px;line-height:14px;font-weight:400;color:#000;">790</span>
<span style="left:406.74px;top:354.15px;font-size:14px;line-height:14px;font-weight:400;color:#000;">198</span>
<span style="left:29.60px;top:374.64px;font-size:14.6px;line-height:14.6px;font-weight:400;color:#000;">Клавиатура проводная</span>
<span style="left:264.47px;top:375.15px;font-size:14px;line-height:14px;font-weight:400;color:#000;">1 190</span>
<span style="left:406.74px;top:375.15px;font-size:14px;line-height:14px;font-weight:400;color:#000;">298</span>
<span style="left:29.60px;top:395.64px;font-size:14.6px;line-height:14.6px;font-weight:400;color:#000;">Сетевой фильтр</span>
<span style="left:276.14px;top:396.15px;font-size:14px;line-height:14px;font-weight:400;color:#000;">890</span>
<span style="left:406.74px;top:396.15px;font-size:14px;line-height:14px;font-weight:400;color:#000;">223</span>
<span style="left:29.60px;top:416.64px;font-size:14.6px;line-height:14.6px;font-weight:400;color:#000;">Батарейки AAA</span>
<span style="left:283.93px;top:417.15px;font-size:14px;line-height:14px;font-weight:400;color:#000;">49</span>
<span style="left:414.53px;top:417.15px;font-size:14px;line-height:14px;font-weight:400;color:#000;">12</span>
<div style="left:303px;top:266px;width:1px;height:167px;background:#fff;"></div>
<div style="left:431px;top:266px;width:1px;height:167px;background:#fff;"></div>
<div style="left:303px;top:432px;width:129px;height:1px;background:#fff;"></div>
<div style="left:301px;top:264px;width:2px;height:171px;background:#107c41;"></div>
<div style="left:301px;top:264px;width:132px;height:2px;background:#107c41;"></div>
<div style="left:432px;top:264px;width:1px;height:167px;background:#107c41;"></div>
<div style="left:301px;top:433px;width:129px;height:2px;background:#107c41;"></div>
<div style="left:430px;top:431px;width:3px;height:4px;background:#107c41;"></div>
<div style="left:298px;top:261px;width:132px;height:171px;border:3px solid #ff0000;border-radius:4px;background:transparent"></div>
<svg style="left:0;top:0" width="925" height="673" viewBox="0 0 925 673"><path d="M455.7,267 V390.8 C452.5,385 447.5,382 443.2,381.5 C448.8,396 456.8,415 458,432.5 C459.2,415 467.2,396 472.8,381.5 C468.5,382 463.5,385 460.3,390.8 V267 Z" fill="#f00"/></svg>
<svg style="left:434px;top:435px;" width="20" height="20" viewBox="0 0 20 20"><rect x="0.5" y="0.5" width="19" height="19" fill="#fff" stroke="#a6a6a6"/><rect x="3.5" y="3.5" width="12" height="4" fill="#fff" stroke="#888"/><rect x="4" y="4" width="5.5" height="3" fill="#1e8bcd"/><path d="M9.5 3.5v4" stroke="#888"/><rect x="3.5" y="7.5" width="6" height="4" fill="#fff" stroke="#888"/><path d="M3 13.5h1M9 13.5h1M3 15.5h1M5 15.5h1M7 15.5h1M9 15.5h1" stroke="#888"/><path d="M14 10.5v6M11 13.5h6" stroke="#999"/></svg>
<div style="left:906px;top:206px;width:15px;height:15px;background:#fff;box-sizing:border-box;border:1px solid #ababab"></div>
<svg style="left:909px;top:211px;" width="9" height="5" viewBox="0 0 9 5"><path d="M0 5L4.5 0 9 5z" fill="#666"/></svg>
<div style="left:906px;top:221px;width:15px;height:367px;background:#fff;box-sizing:border-box;border:1px solid #ababab"></div>
<div style="left:906px;top:588px;width:15px;height:20px;background:repeating-conic-gradient(#d0d0d0 0 25%, #f0f0f0 0 50%) 0 0/2px 2px;"></div>
<div style="left:906px;top:608px;width:15px;height:15px;background:#fff;box-sizing:border-box;border:1px solid #ababab"></div>
<svg style="left:909px;top:613px;" width="9" height="5" viewBox="0 0 9 5"><path d="M0 0h9L4.5 5z" fill="#666"/></svg>
<div style="left:1px;top:623px;width:923px;height:27px;background:#e6e6e6;"></div>
<div style="left:101px;top:622px;width:107px;height:23px;background:#fff;"></div>
<div style="left:101px;top:622px;width:1px;height:23px;background:#9a9a9a;"></div>
<div style="left:207px;top:622px;width:1px;height:23px;background:#9a9a9a;"></div>
<div style="left:101px;top:645px;width:107px;height:2px;background:#107c41;"></div>
<span style="left:113.30px;top:629.75px;font-size:12.7px;line-height:12.7px;font-weight:700;color:#107c41;letter-spacing:0.024px;">microexcel.ru</span>
<svg style="left:27px;top:632px;" width="5" height="8" viewBox="0 0 5 8"><path d="M5 0v8L0 4z" fill="#c0c0c0"/></svg>
<svg style="left:56px;top:632px;" width="5" height="8" viewBox="0 0 5 8"><path d="M0 0v8l5-4z" fill="#c0c0c0"/></svg>
<svg style="left:240px;top:627px;" width="18" height="18" viewBox="0 0 18 18"><circle cx="8.5" cy="8.5" r="7.5" fill="none" stroke="#666" stroke-width="1"/><path d="M8.5 4.5v8M4.5 8.5h8" stroke="#666" stroke-width="1.2"/></svg>
<div style="left:555px;top:631px;width:2px;height:2px;background:#999;"></div>
<div style="left:555px;top:635px;width:2px;height:2px;background:#999;"></div>
<div style="left:555px;top:639px;width:2px;height:2px;background:#999;"></div>
<div style="left:572px;top:629px;width:15px;height:15px;background:#fff;box-sizing:border-box;border:1px solid #ababab"></div>
<svg style="left:577px;top:632px;" width="5" height="9" viewBox="0 0 5 9"><path d="M5 0v9L0 4.5z" fill="#666"/></svg>
<div style="left:587px;top:629px;width:270px;height:15px;background:#fff;box-sizing:border-box;border:1px solid #ababab"></div>
<div style="left:857px;top:629px;width:32px;height:15px;background:repeating-conic-gradient(#d0d0d0 0 25%, #f0f0f0 0 50%) 0 0/2px 2px;"></div>
<div style="left:888px;top:629px;width:15px;height:15px;background:#fff;box-sizing:border-box;border:1px solid #ababab"></div>
<svg style="left:893px;top:632px;" width="5" height="9" viewBox="0 0 5 9"><path d="M0 0v9l5-4.5z" fill="#666"/></svg>
<div style="left:1px;top:650px;width:923px;height:1px;background:#d4d4d4;"></div>
<div style="left:1px;top:651px;width:923px;height:21px;background:#f3f3f3;"></div>
<span style="left:9.60px;top:655.52px;font-size:11.2px;line-height:11.2px;font-weight:400;color:#262626;letter-spacing:0.211px;">Готово</span>
<svg style="left:72px;top:654px;" width="15" height="14" viewBox="0 0 15 14"><circle cx="3.5" cy="3.5" r="3" fill="#555"/><rect x="2.5" y="4.5" width="11" height="9" fill="#fff" stroke="#555"/><path d="M4 7.5h8M4 9.5h8M4 11.5h8M6.5 5v8M9.5 5v8" stroke="#555" stroke-width=".8"/></svg>
<span style="left:348.00px;top:655.52px;font-size:11.2px;line-height:11.2px;font-weight:400;color:#262626;transform:scaleX(0.9794);">Среднее: 1 715</span>
<span style="left:442.30px;top:655.52px;font-size:11.2px;line-height:11.2px;font-weight:400;color:#262626;letter-spacing:0.115px;">Количество: 8</span>
<span style="left:532.60px;top:655.52px;font-size:11.2px;line-height:11.2px;font-weight:400;color:#262626;transform:scaleX(0.9684);">Сумма: 13 720</span>
<div style="left:624px;top:651px;width:38px;height:21px;background:#c5c5c5;"></div>
<svg style="left:635px;top:653px;" width="15" height="15" viewBox="0 0 15 15"><rect x="1.65" y="1.65" width="12" height="12" fill="none" stroke="#707070" stroke-width="1.3"/><path d="M5.65 1.65v12M9.65 1.65v12M1.65 5.65h12M1.65 9.65h12" stroke="#707070" stroke-width="1.3"/></svg>
<svg style="left:673px;top:653px;" width="16" height="15" viewBox="0 0 16 15"><rect x="1.65" y="1.65" width="12.7" height="12" fill="none" stroke="#707070" stroke-width="1.3"/><rect x="4.5" y="3.5" width="7" height="8" fill="none" stroke="#707070" stroke-width="1"/><path d="M6 5.5h4M6 7.5h4M6 9.5h4" stroke="#707070" stroke-width="1"/></svg>
<svg style="left:711px;top:653px;" width="16" height="15" viewBox="0 0 16 15"><rect x="1.65" y="1.65" width="12.7" height="12" fill="none" stroke="#707070" stroke-width="1.3"/><path d="M1.65 8.3H10.3V1.65M5 1.65V8.3M7.5 1.65V8.3" fill="none" stroke="#707070" stroke-width="1.2"/></svg>
<div style="left:743px;top:661px;width:6px;height:1.5px;background:#555;"></div>
<div style="left:753px;top:661px;width:100px;height:1px;background:#999;"></div>
<div style="left:801px;top:655px;width:5px;height:11px;background:#666;"></div>
<svg style="left:856px;top:657px;" width="9" height="9" viewBox="0 0 9 9"><path d="M4.5 0v9M0 4.5h9" stroke="#555" stroke-width="1.5"/></svg>
<span style="left:875.80px;top:655.52px;font-size:11.2px;line-height:11.2px;font-weight:400;color:#262626;transform:scaleX(0.9205);">100 %</span>
<div style="left:0px;top:65px;width:1px;height:608px;background:#017542;"></div>
<div style="left:924px;top:65px;width:1px;height:608px;background:#017542;"></div>
<div style="left:0px;top:672px;width:925px;height:1px;background:#017542;"></div>
</body></html>
